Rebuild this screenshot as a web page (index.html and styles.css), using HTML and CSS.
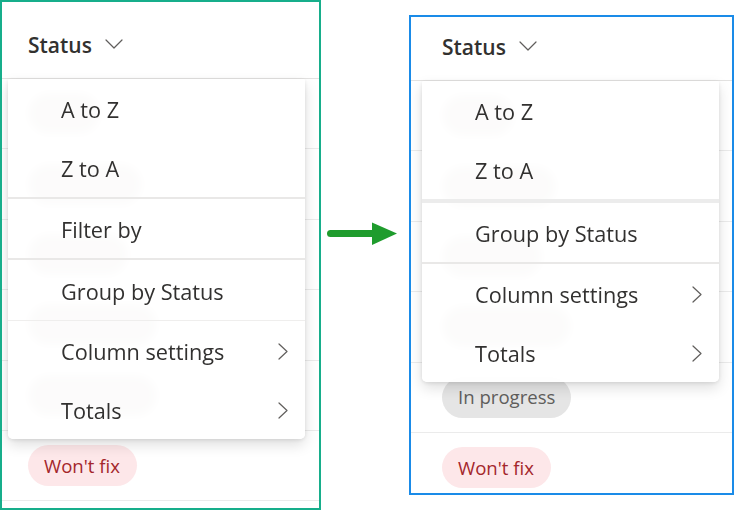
FILE: index.html
```html
<!DOCTYPE html>
<html lang="en">
<head>
<meta charset="utf-8">
<title>Status column menu</title>
<link rel="stylesheet" href="styles.css">
</head>
<body>
<div class="stage">
  <section class="panel panel-before">
    <div class="table">
      <div class="head">
        <span class="head-title">Status
          <svg class="chev-down" width="18" height="10" viewBox="0 0 18 10"><path d="M1 1 L9 9 L17 1" /></svg>
        </span>
      </div>
      <div class="row"><span class="pill ghost w72"></span></div>
      <div class="row"><span class="pill ghost w114"></span></div>
      <div class="row"><span class="pill ghost w100"></span></div>
      <div class="row"><span class="pill ghost w129"></span></div>
      <div class="row"><span class="pill ghost w129"></span></div>
      <div class="row"><span class="pill pill-red">Won't fix</span></div>

      <div class="menu">
        <div class="item">A to Z</div>
        <div class="item">Z to A</div>
        <div class="divider d2"></div>
        <div class="item">Filter by</div>
        <div class="divider d2"></div>
        <div class="item tall">Group by Status</div>
        <div class="divider d1"></div>
        <div class="item">Column settings
          <svg class="chev-right" width="10" height="17" viewBox="0 0 10 17"><path d="M1 1 L9 8.5 L1 16" /></svg>
        </div>
        <div class="item">Totals
          <svg class="chev-right" width="10" height="17" viewBox="0 0 10 17"><path d="M1 1 L9 8.5 L1 16" /></svg>
        </div>
      </div>
    </div>
  </section>

  <div class="arrow">
    <svg width="70" height="24" viewBox="0 0 70 24"><path class="shaft" d="M3.5 11.5 H47" /><polygon class="head-tri" points="45,0.5 70,11.5 45,23" /></svg>
  </div>

  <section class="panel panel-after">
    <div class="table">
      <div class="head">
        <span class="head-title">Status
          <svg class="chev-down" width="18" height="10" viewBox="0 0 18 10"><path d="M1 1 L9 9 L17 1" /></svg>
        </span>
      </div>
      <div class="row"><span class="pill ghost w72"></span></div>
      <div class="row"><span class="pill ghost w114"></span></div>
      <div class="row"><span class="pill ghost w100"></span></div>
      <div class="row"><span class="pill ghost w129"></span></div>
      <div class="row"><span class="pill pill-gray">In progress</span></div>
      <div class="row"><span class="pill pill-red">Won't fix</span></div>

      <div class="menu">
        <div class="item">A to Z</div>
        <div class="item">Z to A</div>
        <div class="divider d4"></div>
        <div class="item">Group by Status</div>
        <div class="divider d2"></div>
        <div class="item">Column settings
          <svg class="chev-right" width="10" height="17" viewBox="0 0 10 17"><path d="M1 1 L9 8.5 L1 16" /></svg>
        </div>
        <div class="item">Totals
          <svg class="chev-right" width="10" height="17" viewBox="0 0 10 17"><path d="M1 1 L9 8.5 L1 16" /></svg>
        </div>
      </div>
    </div>
  </section>
</div>
</body>
</html>
```

FILE: styles.css
```css
* { box-sizing: border-box; }

html, body {
  margin: 0;
  padding: 0;
  background: #ffffff;
}

body {
  width: 738px;
  height: 510px;
  overflow: hidden;
  font-family: "Open Sans", "Noto Sans", "Liberation Sans", sans-serif;
  color: #323130;
}

.stage {
  display: flex;
  align-items: flex-start;
}

/* ---------- panels ---------- */
.panel {
  border: 2px solid;
  overflow: hidden;
  background: #ffffff;
  flex: none;
}

.panel-before {
  width: 321px;
  height: 510px;
  border-color: #17ae8b;
  --shift: 0px;
  --head-h: 77px;
}

.panel-after {
  width: 325px;
  height: 480px;
  margin-top: 15px;
  margin-left: 12px;
  border-color: #1a8be8;
  --shift: 5px;
  --head-h: 64px;
}

.table {
  position: relative;
}

.head {
  height: var(--head-h);
  border-bottom: 1px solid #e3e2e1;
  display: flex;
  align-items: flex-end;
  padding-left: calc(26px + var(--shift));
  padding-bottom: 19px;
}

.head-title {
  display: inline-flex;
  align-items: center;
  gap: 13px;
  font-size: 21px;
  font-weight: 600;
  color: #323130;
  line-height: 28px;
}

.chev-down {
  margin-bottom: 3px;
}

.chev-down path,
.chev-right path {
  fill: none;
  stroke: #605e5c;
  stroke-width: 1.2;
  stroke-linecap: round;
  stroke-linejoin: round;
}

.row {
  height: 70.4px;
  border-bottom: 1px solid #ebebeb;
  display: flex;
  align-items: center;
  padding-left: calc(26px + var(--shift));
}

/* ---------- pills ---------- */
.pill {
  display: inline-flex;
  align-items: center;
  height: 41px;
  border-radius: 21px;
  padding: 0 16px 0 16px;
  font-size: 18.6px;
  line-height: 24px;
}

.pill-red {
  background: #fde7e9;
  color: #a4262c;
  padding-right: 17px;
}

.pill-gray {
  background: #e5e5e5;
  color: #605e5c;
}

.ghost {
  background: #d3cdca;
}

.w72 { width: 72px; }
.w114 { width: 114px; }
.w100 { width: 100px; }
.w129 { width: 129px; }

/* ---------- menu ---------- */
.menu {
  position: absolute;
  top: var(--head-h);
  left: calc(6px + var(--shift));
  width: 297px;
  background: rgba(255, 255, 255, 0.92);
  -webkit-backdrop-filter: blur(4px);
  backdrop-filter: blur(4px);
  border-radius: 2px 2px 5px 5px;
  box-shadow: 0 6px 14px rgba(0, 0, 0, 0.13), 0 1px 4px rgba(0, 0, 0, 0.1);
  display: flex;
  flex-direction: column;
}

.item {
  height: 59px;
  display: flex;
  align-items: center;
  justify-content: space-between;
  padding-left: 53px;
  padding-right: 17px;
  padding-top: 2px;
  font-size: 21.7px;
  font-weight: 400;
  color: #323130;
  white-space: nowrap;
}

.item.tall {
  height: 60px;
}

.divider {
  background: #e9e8e7;
  flex: none;
}

.d1 { height: 1px; background: #efeeed; }
.d2 { height: 2px; }
.d4 { height: 4px; background: #ececec; }

/* ---------- arrow ---------- */
.arrow {
  flex: none;
  margin-left: 6px;
  margin-top: 222px;
  width: 70px;
  height: 24px;
  display: flex;
}

.arrow .shaft {
  stroke: #1f9c2d;
  stroke-width: 7;
  stroke-linecap: round;
  fill: none;
}

.arrow .head-tri {
  fill: #1f9c2d;
}
```
